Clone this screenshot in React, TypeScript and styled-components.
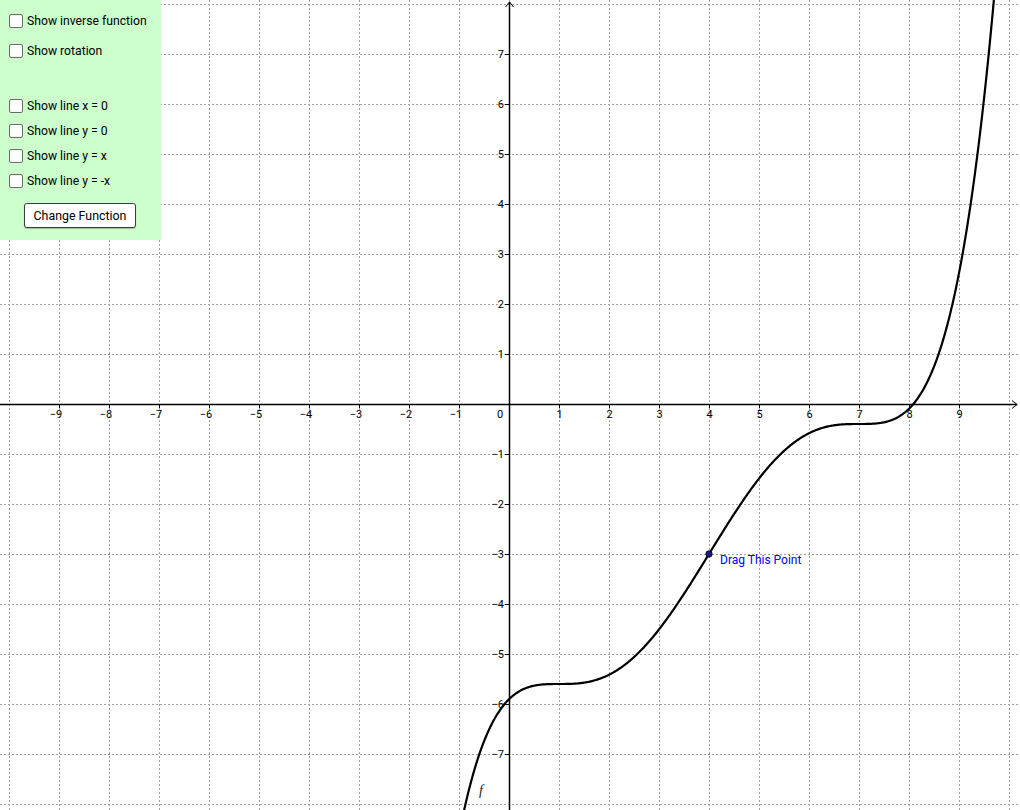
import React from "react";
import styled, { createGlobalStyle } from "styled-components";

const GlobalStyle = createGlobalStyle`
  html, body {
    margin: 0;
    padding: 0;
    background: #ffffff;
    overflow: hidden;
  }
  body {
    font-family: Roboto, "Liberation Sans", sans-serif;
  }
`;

const W = 1020;
const H = 810;
const OX = 509;
const OY = 404;
const UNIT = 50;

const px = (x: number) => OX + x * UNIT;
const py = (y: number) => OY - y * UNIT;

// f(x) = -3 + c * ((x-4)^5/5 - 6(x-4)^3 + 81(x-4))
const f = (x: number) => {
  const t = x - 4;
  const c = 2.6 / 129.6;
  return -3 + c * (Math.pow(t, 5) / 5 - 6 * Math.pow(t, 3) + 81 * t);
};

const buildCurve = () => {
  const pts: string[] = [];
  for (let x = -1.2; x <= 10; x += 0.02) {
    const y = f(x);
    if (y < -8.4 || y > 8.4) continue;
    pts.push(`${pts.length ? "L" : "M"}${px(x).toFixed(2)},${py(y).toFixed(2)}`);
  }
  return pts.join(" ");
};

const Stage = styled.div`
  position: relative;
  width: ${W}px;
  height: ${H}px;
  overflow: hidden;
  background: #ffffff;
`;

const Plot = styled.svg`
  display: block;
  font-family: Roboto, "Liberation Sans", sans-serif;
`;

const Panel = styled.div`
  position: absolute;
  top: 0;
  left: 0;
  width: 161px;
  height: 240px;
  box-sizing: border-box;
  padding: 14px 0 0 9px;
  background: #ccffcc;
  display: flex;
  flex-direction: column;
  align-items: flex-start;
`;

const Row = styled.label<{ $gap: number }>`
  display: flex;
  align-items: center;
  height: 14px;
  margin-top: ${({ $gap }) => $gap}px;
  gap: 4px;
  font-size: 12.2px;
  color: #000;
  white-space: nowrap;
  cursor: pointer;
`;

const Box = styled.span`
  display: inline-block;
  width: 14px;
  height: 14px;
  box-sizing: border-box;
  border: 1px solid #6a6a6a;
  border-radius: 2px;
  background: #ffffff;
  flex: none;
`;

const Button = styled.button`
  margin: 15px 0 0 15px;
  width: 112px;
  height: 25px;
  box-sizing: border-box;
  border: 1px solid #3a3a3a;
  border-radius: 3px;
  background: #ffffff;
  box-shadow: 0 1px 1px rgba(0, 0, 0, 0.25);
  font-family: Roboto, "Liberation Sans", sans-serif;
  font-size: 12.4px;
  color: #000;
  padding: 0;
  cursor: pointer;
`;

const Check = ({ label, gap }: { label: string; gap: number }) => (
  <Row $gap={gap}>
    <Box />
    <span>{label}</span>
  </Row>
);

const Graph = () => {
  const gridX: number[] = [];
  for (let i = -10; i <= 10; i++) gridX.push(i);
  const gridY: number[] = [];
  for (let j = -8; j <= 8; j++) gridY.push(j);

  return (
    <Plot width={W} height={H} viewBox={`0 0 ${W} ${H}`}>
      <g stroke="#a0a0a0" strokeWidth={1} strokeDasharray="2 2" shapeRendering="crispEdges">
        {gridX.map((i) => (
          <line key={`gx${i}`} x1={px(i) + 0.5} y1={0} x2={px(i) + 0.5} y2={H} />
        ))}
        {gridY.map((j) => (
          <line key={`gy${j}`} x1={0} y1={py(j) + 0.5} x2={W} y2={py(j) + 0.5} />
        ))}
      </g>

      {/* axes */}
      <g stroke="#000" strokeWidth={1.5} fill="none">
        <line x1={0} y1={OY + 0.5} x2={1017} y2={OY + 0.5} />
        <line x1={OX + 0.5} y1={H} x2={OX + 0.5} y2={2} />
        <polyline points={`1012,${OY - 3.5} 1017,${OY + 0.5} 1012,${OY + 4.5}`} strokeWidth={1} />
        <polyline points={`${OX - 3.5},7 ${OX + 0.5},2 ${OX + 4.5},7`} strokeWidth={1} />
        {gridX
          .filter((i) => i !== 0 && i > -10 && i < 10)
          .map((i) => (
            <line key={`tx${i}`} x1={px(i) + 0.5} y1={OY} x2={px(i) + 0.5} y2={OY + 4} strokeWidth={1} />
          ))}
        {gridY
          .filter((j) => j !== 0 && j > -8 && j < 8)
          .map((j) => (
            <line key={`ty${j}`} x1={OX - 4} y1={py(j) + 0.5} x2={OX} y2={py(j) + 0.5} strokeWidth={1} />
          ))}
      </g>

      {/* axis labels */}
      <g fontSize={11} fill="#000">
        {gridX
          .filter((i) => i !== 0 && i > -10 && i < 10)
          .map((i) => (
            <text key={`lx${i}`} x={px(i) + (i < 0 ? -3 : 0.5)} y={418} textAnchor="middle">
              {i < 0 ? `\u2212${-i}` : i}
            </text>
          ))}
        <text x={500} y={418} textAnchor="middle">
          0
        </text>
        {gridY
          .filter((j) => j !== 0 && j > -8 && j < 8)
          .map((j) => (
            <text key={`ly${j}`} x={504} y={py(j) + 4} textAnchor="end">
              {j < 0 ? `\u2212${-j}` : j}
            </text>
          ))}
      </g>

      <path d={buildCurve()} stroke="#000" strokeWidth={2.2} fill="none" strokeLinejoin="round" />

      <text
        x={479}
        y={795}
        fontFamily='"Liberation Serif", serif'
        fontStyle="italic"
        fontSize={14}
        fill="#222"
      >
        f
      </text>

      <circle cx={px(4)} cy={py(-3)} r={3.2} fill="#1a1a8c" stroke="#000" strokeWidth={0.8} />
      <text x={720} y={564} fontSize={12} fill="#0000ff">
        Drag This Point
      </text>
    </Plot>
  );
};

export default function App() {
  return (
    <>
      <GlobalStyle />
      <Stage>
        <Graph />
        <Panel>
          <Check label="Show inverse function" gap={0} />
          <Check label="Show rotation" gap={16} />
          <Check label="Show line x = 0" gap={41} />
          <Check label="Show line y = 0" gap={11} />
          <Check label="Show line y = x" gap={11} />
          <Check label="Show line y = -x" gap={11} />
          <Button>Change Function</Button>
        </Panel>
      </Stage>
    </>
  );
}
